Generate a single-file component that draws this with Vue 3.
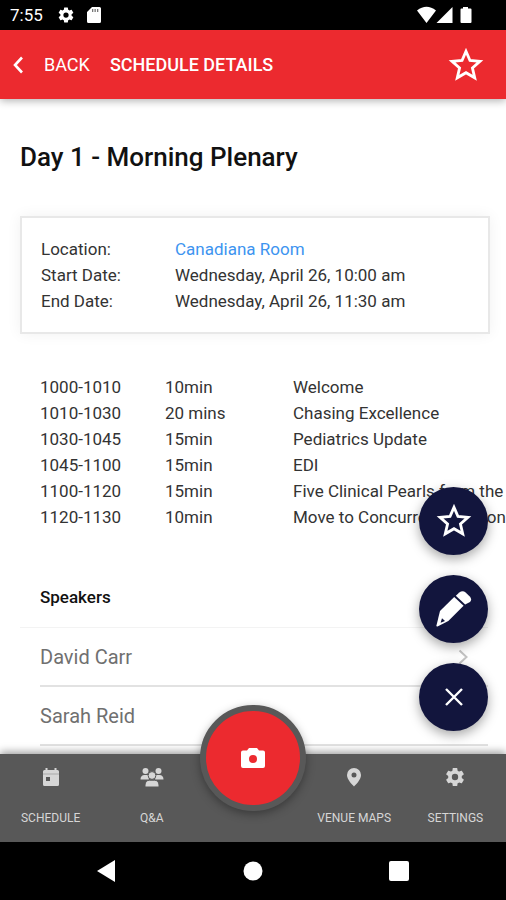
<script setup>
const details = [
  { label: 'Location:', value: 'Canadiana Room', link: true },
  { label: 'Start Date:', value: 'Wednesday, April 26, 10:00 am' },
  { label: 'End Date:', value: 'Wednesday, April 26, 11:30 am' },
]

const sessions = [
  ['1000-1010', '10min', 'Welcome'],
  ['1010-1030', '20 mins', 'Chasing Excellence'],
  ['1030-1045', '15min', 'Pediatrics Update'],
  ['1045-1100', '15min', 'EDI'],
  ['1100-1120', '15min', 'Five Clinical Pearls from the'],
  ['1120-1130', '10min', 'Move to Concurrent Session'],
]

const speakers = ['David Carr', 'Sarah Reid']

const gear =
  'M19.43 12.98c.04-.32.07-.64.07-.98s-.03-.66-.07-.98l2.11-1.65c.19-.15.24-.42.12-.64l-2-3.46c-.12-.22-.39-.3-.61-.22l-2.49 1c-.52-.4-1.08-.73-1.69-.98l-.38-2.65A.49.49 0 0 0 14 2h-4c-.25 0-.46.18-.49.42l-.38 2.65c-.61.25-1.17.59-1.69.98l-2.49-1c-.23-.09-.49 0-.61.22l-2 3.46c-.13.22-.07.49.12.64l2.11 1.65c-.04.32-.07.65-.07.98s.03.66.07.98l-2.11 1.65c-.19.15-.24.42-.12.64l2 3.46c.12.22.39.3.61.22l2.49-1c.52.4 1.08.73 1.69.98l.38 2.65c.03.24.24.42.49.42h4c.25 0 .46-.18.49-.42l.38-2.65c.61-.25 1.17-.59 1.69-.98l2.49 1c.23.09.49 0 .61-.22l2-3.46c.12-.22.07-.49-.12-.64l-2.11-1.65zM12 15.5a3.5 3.5 0 1 1 0-7 3.5 3.5 0 0 1 0 7z'
const star = 'M18 3.5L22.2 13.2L32.7 14.2L24.8 21.2L27.2 31.5L18 26.1L8.8 31.5L11.2 21.2L3.3 14.2L13.8 13.2Z'
</script>

<template>
  <div class="screen">
    <div class="status">
      <span class="clock">7:55</span>
      <svg class="status-gear" viewBox="0 0 24 24"><path :d="gear" /></svg>
      <svg class="status-card" viewBox="0 0 14 16">
        <path d="M5 0h7.500a1.500 1.500 0 0 1 1.500 1.500v13a1.500 1.500 0 0 1-1.500 1.500h-11a1.500 1.500 0 0 1-1.500-1.500V5z" />
        <path class="notch" d="M5 2h1.300v3H5zM7.500 2h1.300v3H7.500zM10 2h1.300v3H10z" />
      </svg>
      <svg class="signals" viewBox="0 0 56 18">
        <path d="M0 4.500Q9.500-3 19 4.500L9.500 17zM35.500 1v16h-16z" />
        <path d="M46 1h5v1.500h2.500a1 1 0 0 1 1 1v12.500a1 1 0 0 1-1 1h-9a1 1 0 0 1-1-1V3.500a1 1 0 0 1 1-1H46z" />
      </svg>
    </div>

    <header class="toolbar">
      <button class="back" type="button">
        <svg viewBox="0 0 12 20"><path d="M9 2.500L2 10l7 7.500" /></svg>
        <span>BACK</span>
      </button>
      <span class="toolbar-title">SCHEDULE DETAILS</span>
      <button class="favourite" type="button" aria-label="Favourite">
        <svg class="star" viewBox="-1 -1 38 38"><path :d="star" /></svg>
      </button>
    </header>

    <div class="body">
      <main class="content">
        <h1>Day 1 - Morning Plenary</h1>

        <dl class="card">
          <template v-for="d in details" :key="d.label">
            <dt>{{ d.label }}</dt>
            <dd>
              <a v-if="d.link" href="#">{{ d.value }}</a>
              <template v-else>{{ d.value }}</template>
            </dd>
          </template>
        </dl>

        <table class="sessions">
          <tbody>
            <tr v-for="s in sessions" :key="s[0]">
              <td class="time">{{ s[0] }}</td>
              <td class="length">{{ s[1] }}</td>
              <td>{{ s[2] }}</td>
            </tr>
          </tbody>
        </table>

        <section class="speakers">
          <h2>Speakers</h2>
          <ul>
            <li v-for="name in speakers" :key="name">
              <a href="#">
                <span>{{ name }}</span>
                <svg viewBox="0 0 10 16"><path d="M1.500 1.500L8.500 8l-7 6.500" /></svg>
              </a>
            </li>
          </ul>
        </section>
      </main>

      <div class="fabs">
        <button type="button" aria-label="Add to favourites">
          <svg class="star" viewBox="-1 -1 38 38"><path :d="star" /></svg>
        </button>
        <button type="button" aria-label="Take notes">
          <svg class="pencil" viewBox="0 0 36 36">
            <path d="M18.200 6L27.600 14.800L12.300 30L1.500 35.500Q.2 35.800.5 34.300L4 20z" />
            <path d="M19.800 4.700L23.300 1.600Q26.500-.8 29.600 1.400L33.800 5.500Q36.400 8.500 34 11L29.200 13.500z" />
            <path class="lead" d="M6 27.200L9 30L4.600 31.800z" />
          </svg>
        </button>
        <button type="button" aria-label="Close">
          <svg class="cross" viewBox="0 0 20 20"><path d="M2 2l16 16M18 2L2 18" /></svg>
        </button>
      </div>
    </div>

    <nav class="tabs">
      <a href="#">
        <svg viewBox="0 0 20 20">
          <path fill-rule="evenodd" d="M4.500 1h2v2h7V1h2v2h1A1.500 1.500 0 0 1 18 4.500V17.500a1.500 1.500 0 0 1-1.500 1.500h-13A1.500 1.500 0 0 1 2 17.500v-13A1.500 1.500 0 0 1 3.500 3h1zM5 10v4h4v-4z" />
          <path class="rule" d="M2 7h16" />
        </svg>
        <span>SCHEDULE</span>
      </a>
      <a href="#">
        <svg class="people" viewBox="0 0 24 20">
          <circle cx="5.500" cy="4" r="3" />
          <circle cx="18.500" cy="4" r="3" />
          <path d="M.5 12.500c0-3 1.500-4.500 4-4.500h4L9 12.500zM23.500 12.500c0-3-1.500-4.500-4-4.500h-4L15 12.500z" />
          <g class="front">
            <circle cx="12" cy="8.500" r="3.900" />
            <path d="M5 20v-2c0-3 2-4.800 4.500-4.800h5c2.500 0 4.500 1.800 4.500 4.800v2z" />
          </g>
        </svg>
        <span>Q&amp;A</span>
      </a>
      <button class="camera" type="button" aria-label="Camera">
        <svg viewBox="0 0 24 20">
          <path fill-rule="evenodd" d="M8 0h8l2 2.500h4A2 2 0 0 1 24 4.500V18a2 2 0 0 1-2 2H2a2 2 0 0 1-2-2V4.500a2 2 0 0 1 2-2h4zM12 7a4 4 0 1 0 0 8 4 4 0 0 0 0-8z" />
        </svg>
      </button>
      <a href="#">
        <svg viewBox="0 0 20 20">
          <path fill-rule="evenodd" d="M10 1a7 7 0 0 0-7 7c0 4.500 5 9.500 7 11.500 2-2 7-7 7-11.500a7 7 0 0 0-7-7zM10 5.500a2.500 2.500 0 1 1 0 5 2.500 2.500 0 0 1 0-5z" />
        </svg>
        <span>VENUE MAPS</span>
      </a>
      <a href="#">
        <svg viewBox="1 1 22 22"><path :d="gear" /></svg>
        <span>SETTINGS</span>
      </a>
    </nav>

    <div class="system">
      <button type="button" aria-label="Back">
        <svg viewBox="0 0 22 22"><path d="M19 0v22L1 11z" /></svg>
      </button>
      <button type="button" aria-label="Home">
        <svg viewBox="0 0 22 22"><circle cx="11" cy="11" r="9.500" /></svg>
      </button>
      <button type="button" aria-label="Recent apps">
        <svg viewBox="0 0 22 22"><rect x="1" y="1" width="20" height="20" rx="2" /></svg>
      </button>
    </div>
  </div>
</template>

<style>
body {
  margin: 0;
}
</style>

<style scoped>
.screen {
  display: flex;
  flex-direction: column;
  height: 100vh;
  overflow: hidden;
  background: #fff;
  color: #333;
  font-family: Roboto, "Liberation Sans", sans-serif;
  font-size: 17px;
}
svg {
  display: block;
  fill: currentColor;
}
button {
  padding: 0;
  border: 0;
  background: none;
  color: inherit;
  font: inherit;
}
a {
  color: inherit;
  text-decoration: none;
}

.status {
  display: flex;
  align-items: center;
  height: 30px;
  padding: 0 33px 0 10px;
  background: #000;
  color: #fff;
}
.status-gear {
  width: 18px;
  height: 18px;
  margin-left: 14px;
}
.status-card {
  width: 14px;
  height: 16px;
  margin-left: 12px;
}
.notch {
  fill: #777;
}
.signals {
  width: 56px;
  height: 18px;
  margin-left: auto;
}

.toolbar {
  position: relative;
  z-index: 1;
  display: flex;
  align-items: center;
  height: 69px;
  padding: 0 22px 0 13px;
  background: #ec2a2f;
  color: #fff;
  font-size: 18px;
  box-shadow: 0 2px 8px rgba(0, 0, 0, 0.3);
}
.back {
  display: flex;
  align-items: center;
  gap: 19px;
}
.back svg {
  width: 12px;
  height: 20px;
  fill: none;
  stroke: currentColor;
  stroke-width: 2.6;
}
.toolbar-title {
  margin-left: 20px;
  font-weight: 500;
}
.favourite {
  margin-left: auto;
}
.star {
  width: 36px;
  height: 36px;
  fill: none;
  stroke: currentColor;
  stroke-width: 3;
}

.body {
  position: relative;
  flex: 1;
  min-height: 0;
}
.content {
  height: 100%;
  overflow: hidden;
}
h1 {
  margin: 0;
  padding: 42px 20px 0;
  color: #111;
  font-size: 26px;
  font-weight: 500;
  line-height: 32px;
}
.card {
  display: grid;
  grid-template-columns: 134px 1fr;
  margin: 43px 16px 0 20px;
  padding: 18px 19px;
  border: 2px solid #e8e8e8;
  line-height: 26px;
  box-shadow: 0 0 14px rgba(0, 0, 0, 0.06);
}
.card dd {
  margin: 0;
}
.card a {
  color: #3d94f0;
}
.sessions {
  margin: 40px 0 0 40px;
  border-collapse: collapse;
  line-height: 26px;
  white-space: nowrap;
}
.sessions td {
  padding: 0;
}
.sessions .time {
  min-width: 125px;
}
.sessions .length {
  min-width: 128px;
}
.speakers {
  margin: 37px 18px 0 20px;
}
.speakers h2 {
  margin: 0;
  padding: 0 20px;
  border-bottom: 1px solid #f3f3f3;
  color: #111;
  font-size: 17px;
  font-weight: 500;
  line-height: 60px;
}
.speakers ul {
  margin: 0 0 0 20px;
  padding: 0;
  list-style: none;
}
.speakers li a {
  display: flex;
  align-items: center;
  justify-content: space-between;
  height: 57px;
  padding-right: 20px;
  border-bottom: 2px solid #e2e2e2;
  color: #707070;
  font-size: 20px;
}
.speakers li svg {
  width: 10px;
  height: 16px;
  fill: none;
  stroke: #c4c4c4;
  stroke-width: 2;
}

.fabs {
  position: absolute;
  right: 18px;
  bottom: 23px;
  display: grid;
  gap: 20px;
}
.fabs button {
  display: grid;
  place-items: center;
  width: 69px;
  height: 68px;
  border-radius: 50%;
  background: #12153d;
  color: #fff;
  box-shadow: 0 4px 12px rgba(0, 0, 0, 0.35);
}
.fabs .pencil {
  width: 36px;
  height: 36px;
}
.fabs .lead {
  fill: #12153d;
}
.fabs .cross {
  width: 20px;
  height: 20px;
  stroke: currentColor;
  stroke-width: 2.4;
}

.tabs {
  position: relative;
  display: grid;
  grid-template-columns: repeat(5, minmax(0, 1fr));
  height: 88px;
  background: #585858;
  color: #d6d6d6;
  font-size: 12px;
  box-shadow: 0 -2px 8px rgba(0, 0, 0, 0.4);
}
.tabs a {
  display: flex;
  flex-direction: column;
  align-items: center;
  gap: 23px;
  padding-top: 13px;
  line-height: 16px;
  white-space: nowrap;
}
.tabs a svg {
  width: 20px;
  height: 20px;
}
.tabs .people {
  width: 24px;
}
.front {
  stroke: #585858;
  stroke-width: 1;
}
.rule {
  stroke: #aaa;
  stroke-width: 1;
}
.camera {
  position: relative;
  top: -49px;
  display: grid;
  place-items: center;
  justify-self: center;
  box-sizing: border-box;
  width: 106px;
  height: 106px;
  border: 6px solid #585858;
  border-radius: 50%;
  background: #ec2a2f;
  color: #fff;
  box-shadow: 0 3px 10px rgba(0, 0, 0, 0.35);
}
.camera svg {
  width: 24px;
  height: 20px;
}

.system {
  display: flex;
  justify-content: center;
  align-items: center;
  gap: 124px;
  height: 58px;
  background: #000;
  color: #fff;
}
.system svg {
  width: 22px;
  height: 22px;
}
</style>
